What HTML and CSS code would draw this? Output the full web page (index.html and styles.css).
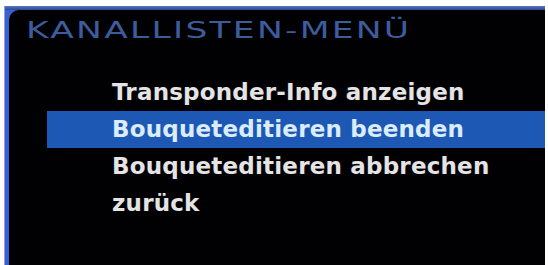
FILE: index.html
```html
<!DOCTYPE html>
<html lang="de">
<head>
<meta charset="utf-8">
<title>Kanallisten-Menü</title>
<link rel="stylesheet" href="styles.css">
</head>
<body>
<div class="frame">
  <div class="screen">
    <div class="title"><span class="title-text">KANALLISTEN-MENÜ</span></div>
    <ul class="menu">
      <li class="item">Transponder-Info anzeigen</li>
      <li class="item selected">Bouqueteditieren beenden</li>
      <li class="item">Bouqueteditieren abbrechen</li>
      <li class="item">zurück</li>
    </ul>
  </div>
</div>
</body>
</html>
```
FILE: styles.css
```css
html, body {
  margin: 0;
  padding: 0;
  background: #ffffff;
}
.frame {
  margin: 6px 3px 0 4px;
  height: 259px;
  padding: 4px 0 0 4px;
  box-sizing: border-box;
  background: linear-gradient(to bottom, #5a78c0 0, #2b4890 4px, #3b5fd0 4px);
  border-left: 1px solid #8aa0e8;
}
.screen {
  height: 100%;
  background: #010104;
  border-top-left-radius: 10px;
  overflow: hidden;
}
.title {
  padding: 6px 0 0 17px;
  height: 58px;
  box-sizing: border-box;
  font-family: "DejaVu Sans", sans-serif;
  font-size: 23px;
  line-height: 28px;
  color: #3d5c9c;
  white-space: nowrap;
}
.title-text {
  display: inline-block;
  letter-spacing: 1.5px;
  transform: scaleX(1.5);
  transform-origin: left center;
}
.menu {
  list-style: none;
  margin: 0;
  padding: 6px 0 0 38px;
}
.item {
  height: 37px;
  line-height: 37px;
  padding-left: 65px;
  font-family: "DejaVu Sans", sans-serif;
  font-weight: bold;
  font-size: 23px;
  letter-spacing: 0.2px;
  color: #e4e4e4;
  white-space: nowrap;
}
.selected {
  background: #1d59b4;
  color: #dcecff;
}
```
